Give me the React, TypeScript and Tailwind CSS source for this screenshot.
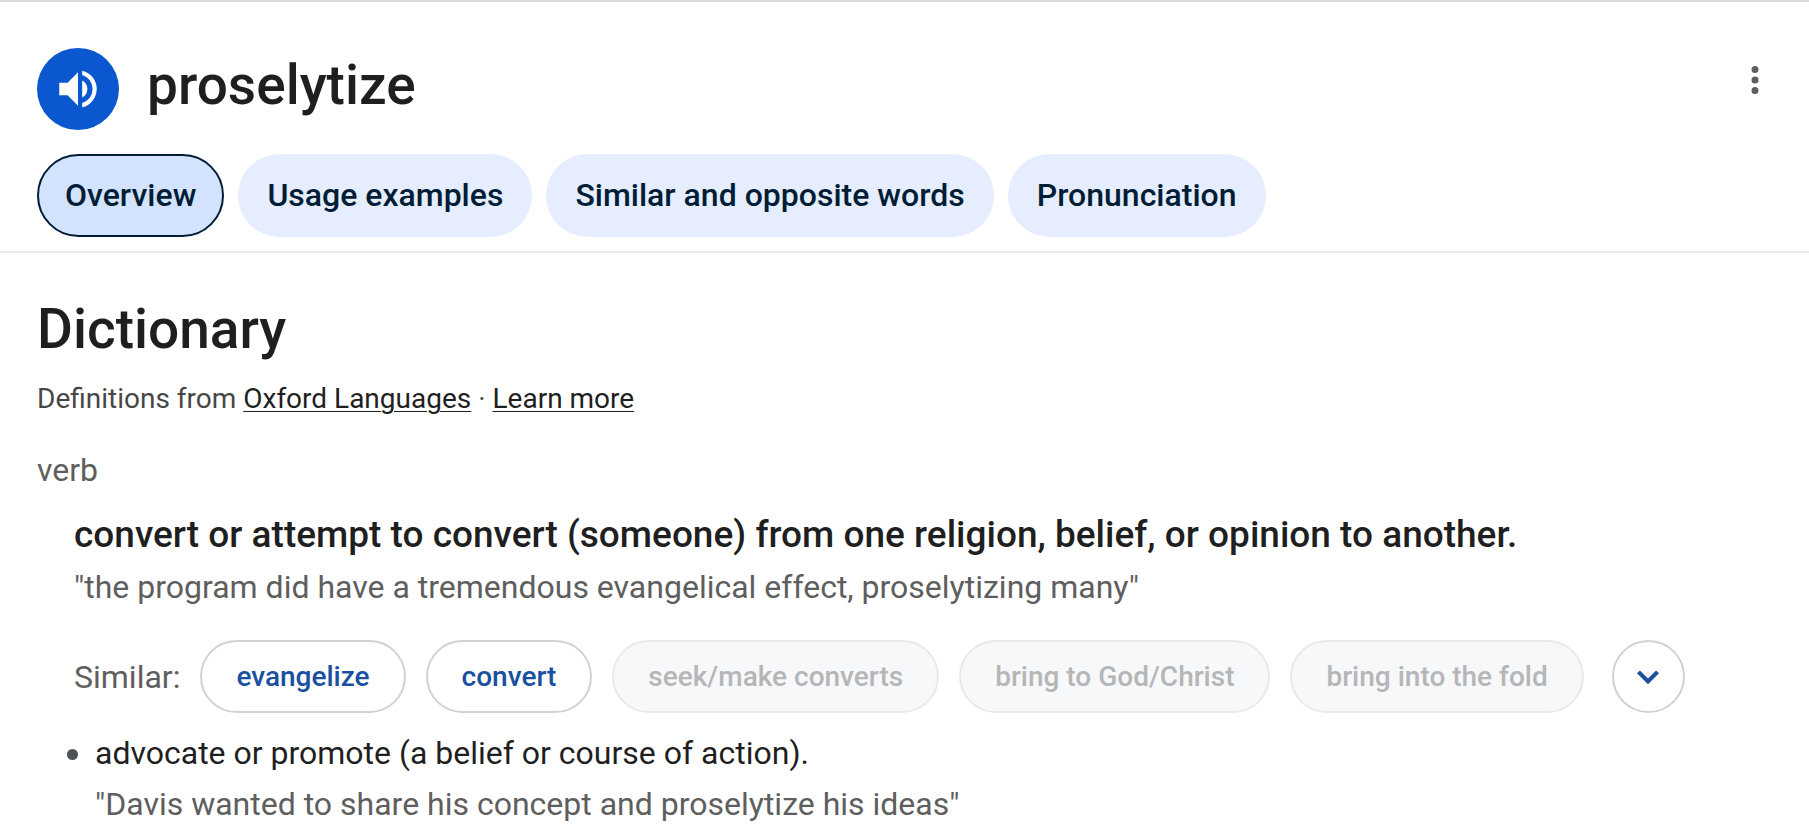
const tabs = ["Usage examples", "Similar and opposite words", "Pronunciation"];

const similarWords = [
  { word: "evangelize", enabled: true },
  { word: "convert", enabled: true },
  { word: "seek/make converts", enabled: false },
  { word: "bring to God/Christ", enabled: false },
  { word: "bring into the fold", enabled: false },
];

const SpeakerIcon = () => (
  <svg aria-hidden="true" className="size-[50px]" fill="currentColor" viewBox="0 0 24 24">
    <path d="M3 9v6h4l5 5V4L7 9H3zm13.5 3A4.5 4.5 0 0 0 14 7.97v8.05A4.5 4.5 0 0 0 16.5 12zM14 3.23v2.06a7 7 0 0 1 0 13.42v2.06a9 9 0 0 0 0-17.54z" />
  </svg>
);

const MoreIcon = () => (
  <svg aria-hidden="true" className="size-[42px]" fill="currentColor" viewBox="0 0 24 24">
    <path d="M12 8a2 2 0 1 0 0-4 2 2 0 0 0 0 4zm0 2a2 2 0 1 0 0 4 2 2 0 0 0 0-4zm0 6a2 2 0 1 0 0 4 2 2 0 0 0 0-4z" />
  </svg>
);

const ChevronIcon = () => (
  <svg aria-hidden="true" className="size-11 shrink-0" fill="currentColor" viewBox="0 0 24 24">
    <path d="M7.6 8.4 12 12.8l4.4-4.4L18 10l-6 6-6-6z" />
  </svg>
);

const App = () => {
  return (
    <div className="border-t-2 border-[#dadada] bg-white font-[Roboto,sans-serif] text-[#1f1f1f]">
      <header className="border-b-2 border-[#e8e8e8] px-[37px] pt-[46px] pb-[14px]">
        <div className="flex items-start justify-between">
          <div className="flex items-center gap-7">
            <button
              aria-label="Listen"
              className="flex size-[82px] items-center justify-center rounded-full bg-[#0b57d0] text-white"
            >
              <SpeakerIcon />
            </button>
            <h1 className="pb-2 text-[55px] leading-[64px] font-medium">proselytize</h1>
          </div>
          <button aria-label="More options" className="-mr-1 mt-[11px] text-[#5e5e5e]">
            <MoreIcon />
          </button>
        </div>
        <nav className="mt-6 flex gap-[14px] text-[32px] leading-10 font-medium text-[#001d35]">
          <button className="h-[83px] rounded-full border-2 border-[#001d35] bg-[#d3e3fd] px-[26px] pb-[2px]">
            Overview
          </button>
          {tabs.map((tab) => (
            <button key={tab} className="h-[83px] rounded-full bg-[#e5edff] px-[29px] pb-[2px]">
              {tab}
            </button>
          ))}
        </nav>
      </header>

      <main className="px-[37px] pt-11">
        <h2 className="text-[55px] leading-[64px] font-medium">Dictionary</h2>
        <p className="mt-[18px] text-[28px] leading-10 text-[#474747]">
          Definitions from{" "}
          <a
            className="text-[#1f1f1f] underline decoration-1 underline-offset-3"
            href="#oxford"
          >
            Oxford Languages
          </a>{" "}
          ·{" "}
          <a
            className="text-[#1f1f1f] underline decoration-1 underline-offset-3"
            href="#learn"
          >
            Learn more
          </a>
        </p>
        <p className="mt-[31px] text-[32px] leading-10 text-[#5e5e5e]">verb</p>

        <section className="pl-[37px]">
          <p className="mt-[25px] text-[37px] leading-10 font-medium">
            convert or attempt to convert (someone) from one religion, belief, or opinion to another.
          </p>
          <p className="mt-3 text-[32px] leading-10 text-[#5e5e5e]">
            "the program did have a tremendous evangelical effect, proselytizing many"
          </p>
          <div className="mt-[33px] flex items-center">
            <span className="mr-5 text-[32px] leading-10 text-[#5e5e5e]">Similar:</span>
            <div className="flex gap-5 text-[28px] leading-9 font-medium">
              {similarWords.map(({ word, enabled }) => (
                <button
                  key={word}
                  className={`h-[73px] rounded-full border-2 px-[34px] ${
                    enabled
                      ? "border-[#d2d2d2] text-[#1a50a0]"
                      : "border-[#e8eaea] bg-[#f7f8fa] text-[#b5b6b7]"
                  }`}
                  disabled={!enabled}
                >
                  {word}
                </button>
              ))}
            </div>
            <button
              aria-label="Show more similar words"
              className="ml-7 flex size-[73px] items-center justify-center rounded-full border-2 border-[#d2d2d2] text-[#1a50a0]"
            >
              <ChevronIcon />
            </button>
          </div>
        </section>

        <ul className="mt-5 pl-[58px] text-[32px] leading-10">
          <li className="relative before:absolute before:top-4 before:-left-7 before:size-[11px] before:rounded-full before:bg-[#4d5156]">
            <p>advocate or promote (a belief or course of action).</p>
            <p className="mt-[11px] text-[#5e5e5e]">
              "Davis wanted to share his concept and proselytize his ideas"
            </p>
          </li>
        </ul>
      </main>
    </div>
  );
};

export default App;
